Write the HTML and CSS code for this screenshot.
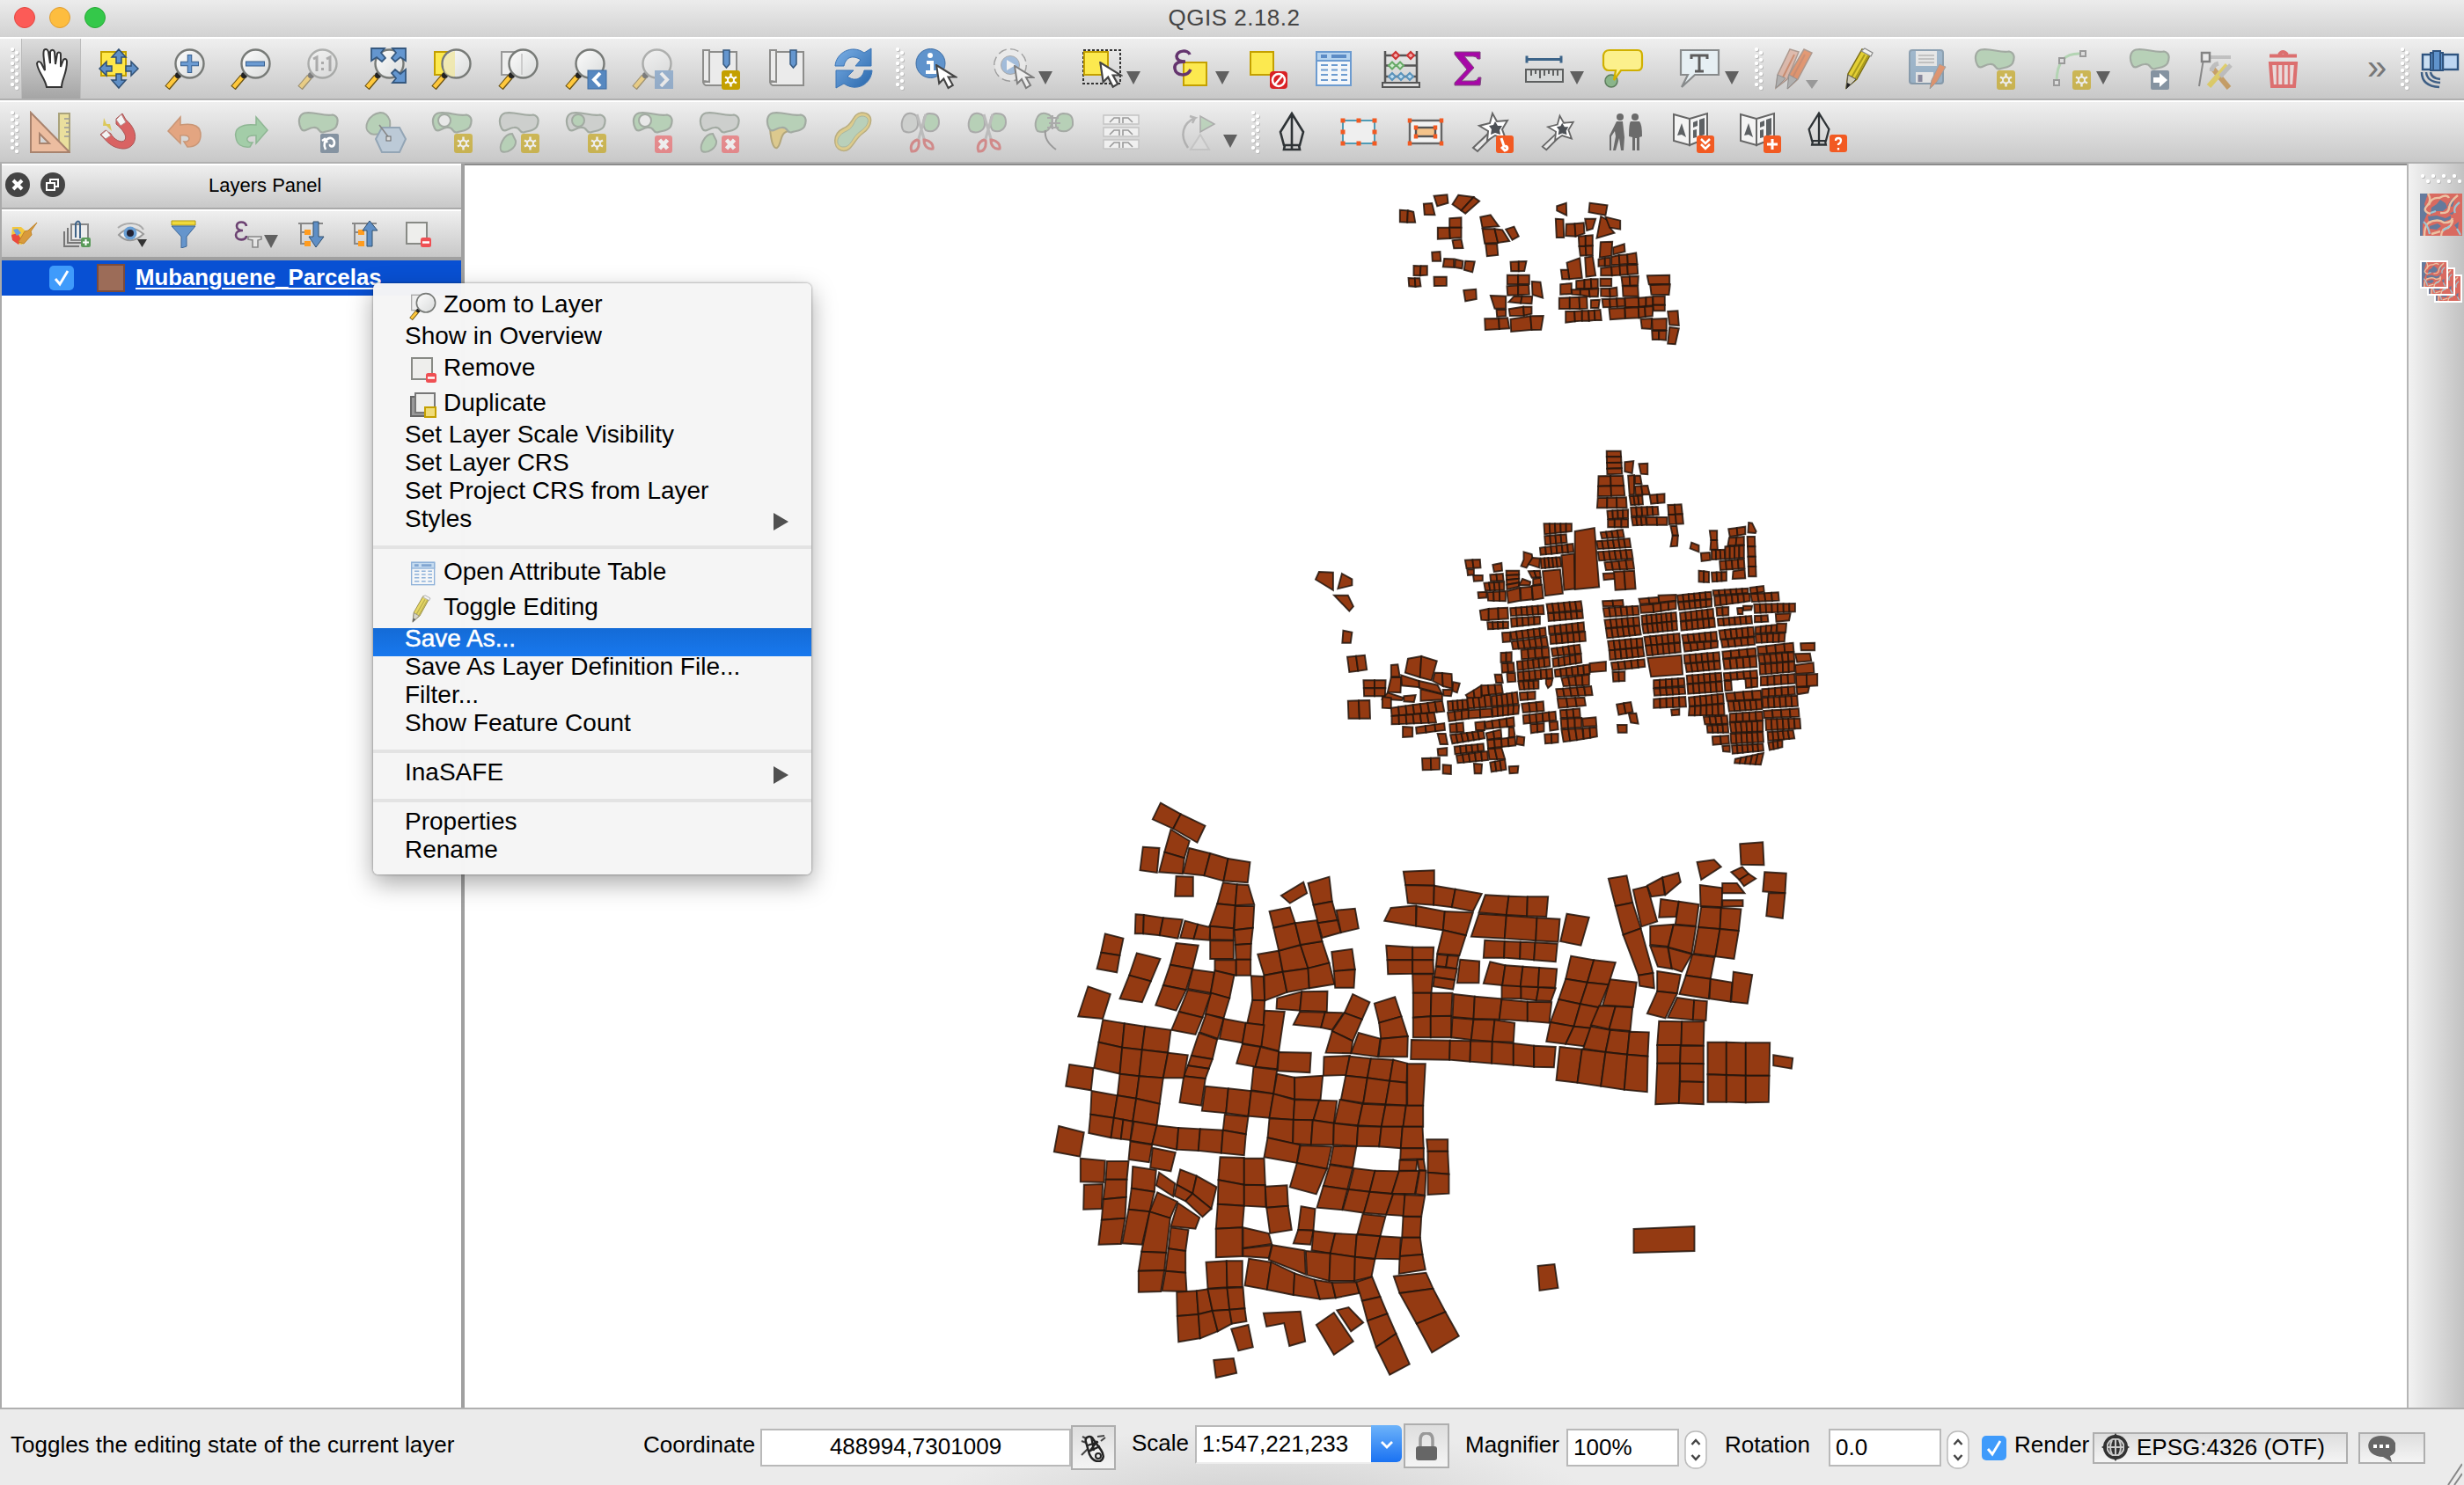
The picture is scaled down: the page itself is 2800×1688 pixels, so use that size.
FILE: index.html
```html
<!DOCTYPE html>
<html lang="en">
<head>
<meta charset="utf-8">
<title>QGIS 2.18.2</title>
<link rel="stylesheet" href="styles.css">
</head>
<body>
<svg class="defs" aria-hidden="true">
  <defs>
    <linearGradient id="glass" x1="0" y1="0" x2="1" y2="1"><stop offset="0" stop-color="#fdfdfd"/><stop offset="1" stop-color="#d9dbdb"/></linearGradient>
    <linearGradient id="blue" x1="0" y1="0" x2="1" y2="1"><stop offset="0" stop-color="#7db0e6"/><stop offset="1" stop-color="#2766ab"/></linearGradient>
    <symbol id="lens" viewBox="0 0 48 48">
      <path d="M3 46L14 33" stroke="#6b5213" stroke-width="7"/><path d="M3.500 45L13 34" stroke="#ffc83c" stroke-width="4.500"/>
      <circle cx="15.500" cy="31.500" r="3.500" fill="#222"/>
      <circle cx="28.500" cy="18.500" r="16" fill="url(#glass)" stroke="#777a77" stroke-width="2.400"/>
    </symbol>
    <symbol id="blob" viewBox="0 0 48 48">
      <path d="M8 2.500C2 4 0 12 4 20C7 26 12 19 18 19C26 18 23 25 29 24.500C34 22 40 24 44 18C47 11 46 6 40 4.500C31 7 18 0 8 2.500Z" stroke="#a2aaa2" stroke-width="2.200"/>
    </symbol>
    <symbol id="badge-new" viewBox="0 0 48 48">
      <rect x="26" y="26" width="21" height="22" rx="3" fill="#c4a000"/>
      <path d="M36.500 29.500v15M30 33.500l13 7M30 40.500l13-7" stroke="#fff" stroke-width="2.400"/><circle cx="36.500" cy="37" r="3.500" fill="#c4a000" stroke="#fff" stroke-width="2"/>
    </symbol>
    <symbol id="badge-del" viewBox="0 0 48 48">
      <rect x="26" y="28" width="20" height="20" rx="3" fill="#ef5a5e"/><path d="M31.500 33l9 10M40.500 33l-9 10" stroke="#fff" stroke-width="4.500"/>
    </symbol>
    <symbol id="arrow-cur" viewBox="0 0 24 28"><path d="M1 1l3 20 5-5 5 10 5-3-5-9h8z" fill="#fff" stroke="#444" stroke-width="2"/></symbol>
    <symbol id="pencil" viewBox="0 0 48 48">
      <path d="M24 2l10 5-16 29-12 10 2-16z" fill="#e3cf35" stroke="#7a6c14" stroke-width="1.500"/>
      <path d="M27 8L12 34M31 9L16 36" stroke="#a99b1c" stroke-width="2"/><path d="M23 4l4-3 9 5-2 4z" fill="#f3f3f1" stroke="#888" stroke-width="1.200"/>
      <path d="M8 31l9 5-11 11z" fill="#cfcbb9" stroke="#555"/><path d="M7 40l4 2-5 5z" fill="#222"/>
    </symbol>
    <symbol id="pen-nib" viewBox="0 0 48 48">
      <path d="M24 3L11 24l4 15h18l4-15zM24 3v42M16 39l-1 5h18l-1-5" fill="none" stroke="#2e3336" stroke-width="2.600"/>
    </symbol>
    <symbol id="wand" viewBox="0 0 48 48">
      <path d="M2 42L20 25l4 4L7 46z" fill="#e8e8e8" stroke="#666" stroke-width="2"/>
      <path d="M24 3l5 9 12-1-6 10 4 11-12-4-9 6 1-11-10-6 12-3z" fill="#fff" stroke="#666" stroke-width="2"/><path d="M27 12l3 5 5 0-3 5 1 5-6-2-5 2 1-6-3-4 5-1z" fill="#4d5156"/>
    </symbol>
    <symbol id="book" viewBox="0 0 48 48">
      <path d="M2 4l18 5v30L2 34zM20 9L40 3v28l-20 8z" fill="#f4f4f4" stroke="#666" stroke-width="2"/>
      <path d="M6 28l5-14 5 16-5-3zM24 13l5-2v6l-5 2zM24 22l4-1v9l-4 1zM31 10l6-2v19l-6 2z" fill="#5d6164"/>
    </symbol>
    <symbol id="badge-o" viewBox="0 0 20 20"><rect width="20" height="20" rx="3" fill="#f25a22"/></symbol>
    <symbol id="page-remove" viewBox="0 0 32 32"><rect x="3" y="3" width="23" height="24" fill="#eeeeec" stroke="#888a85" stroke-width="2"/><rect x="19" y="20" width="12" height="11" rx="2.500" fill="#ef4f53"/><path d="M21 25.500h8" stroke="#fff" stroke-width="2.500"/></symbol>
    <symbol id="table" viewBox="0 0 48 48">
      <rect x="4" y="5" width="39" height="38" fill="#f4f7fa" stroke="#6c9bd0" stroke-width="2"/><rect x="4" y="5" width="39" height="10" fill="#b5d3ef" stroke="#6c9bd0" stroke-width="2"/>
      <path d="M9 10h7M21 10h17" stroke="#5c8cc6" stroke-width="4"/><path d="M9 20h8M21 20h7M32 20h7M9 25.500h8M21 25.500h7M32 25.500h7M9 31h8M21 31h7M32 31h7M9 37h8M21 37h7M32 37h7" stroke="#6c9bd0" stroke-width="2.200"/>
    </symbol>
    <symbol id="swirl" viewBox="0 0 48 48">
      <rect width="48" height="48" fill="#d96a60"/>
      <path d="M0 0h9L5 12l3 11-5 12v13H0z" fill="#657a9c"/>
      <path d="M13 16l6-4 4-5 6 4 2 5-5 4-8 0-6 4zM31 14l5-8 4-2-3 11zM9 26l10-1 10 3 6-3v4l-8 3-9-2-8 2zM11 37l9-3 4 3-5 4-8-1zM39 36l5-4-1 9zM33 23l6-3-2 4z" fill="#657a9c"/>
      <path d="M9 0q5 8-1 14t4 9M10 13q3-9 12-8 8-5 11 0M23 22q10 1 10-6 1-7 10-14M5 48c0-8 2-15 8-16M9 33q12-5 18 0 8 1 10-5M24 48q1-9 8-9 5-4 5-9M13 46l10-3" fill="none" stroke="#ebc1a2" stroke-width="2.400"/>
      <path d="M4 32q5 4 7 14M40 22q-3-6 5-12M42 40l4 7M34 37l-8 5M12 22l6-2" fill="none" stroke="#9cc5d3" stroke-width="2.200"/>
    </symbol>
  </defs>
</svg>

<div class="window">
  <header class="titlebar">
    <div class="lights"><i class="light light-close"></i><i class="light light-min"></i><i class="light light-max"></i></div>
    <h1 class="title">QGIS 2.18.2</h1>
  </header>

  <div class="toolbar toolbar-main">
    <i class="grip"></i>
    <div class="tool tool-pressed"><svg viewBox="0 0 48 48"><path d="M17 45C15 34 7 28 6 18c1-3 4-2 5 0l4 8C15 15 12 8 14 3c2-2 4-1 5 2l2 13 0-13c1-3 4-3 5 0l1 14 2-12c1-2 4-2 4 1l0 14 3-8c2-2 4-1 4 2 0 14-6 20-6 29z" fill="#fff" stroke="#333" stroke-width="2"/></svg></div>
    <div class="tool"><svg viewBox="0 0 48 48"><rect x="4" y="5" width="28" height="27" fill="#ffe748" stroke="#c4a000" stroke-width="2"/><path d="M24 2l8 9h-5v7h-6v-7h-5zM24 46l8-9h-5v-7h-6v7h-5zM2 24l8-8v5h6v6h-6v5zM46 24l-8-8v5h-6v6h6v5z" fill="#5f8fc6" stroke="#2f4f74" stroke-width="1.500"/></svg></div>
    <div class="tool"><svg viewBox="0 0 48 48"><use href="#lens"/><path d="M28.500 8v21M18 18.500h21" stroke="#38608f" stroke-width="5.500"/><path d="M28.500 9v19M19 18.500h19" stroke="#6b9bd2" stroke-width="3.500"/></svg></div>
    <div class="tool"><svg viewBox="0 0 48 48"><use href="#lens"/><path d="M17 18.500h22" stroke="#38608f" stroke-width="6"/><path d="M18 18.500h20" stroke="#6b9bd2" stroke-width="4"/></svg></div>
    <div class="tool dim"><svg viewBox="0 0 48 48"><use href="#lens"/><path d="M18 13l4-2v16M33 13l4-2v16M28.500 16v3M28.500 23v3" fill="none" stroke="#777" stroke-width="3"/></svg></div>
    <div class="tool"><svg viewBox="0 0 48 48"><use href="#lens"/><path d="M8 1h15l-4 5 5 6-4 4-6-5-6 4zM47 1H32l4 5-5 6 4 4 6-5 6 4zM47 40H32l4-5-5-6 4-4 6 5 6-5z" fill="#6496cf" stroke="#35587f" stroke-width="1.800"/></svg></div>
    <div class="tool"><svg viewBox="0 0 48 48"><rect x="4" y="5" width="22" height="26" fill="#fce94f" stroke="#c4a000" stroke-width="2"/><use href="#lens"/><path d="M27 4C15 6 11 18 16 29q6 5 11 4z" fill="#efe6a2" opacity=".8"/></svg></div>
    <div class="tool"><svg viewBox="0 0 48 48"><rect x="4" y="5" width="22" height="26" fill="#eee" stroke="#999" stroke-width="2"/><use href="#lens"/><path d="M27 7v24" stroke="#ccc" stroke-width="2"/></svg></div>
    <div class="tool"><svg viewBox="0 0 48 48"><use href="#lens"/><rect x="26" y="26" width="21" height="21" fill="#5788c0" stroke="#3f6ca2"/><path d="M40 29l-7 7.500 7 7.500" fill="none" stroke="#fff" stroke-width="4"/></svg></div>
    <div class="tool dim"><svg viewBox="0 0 48 48"><use href="#lens"/><rect x="26" y="26" width="21" height="21" fill="#5788c0"/><path d="M33 29l7 7.500-7 7.500" fill="none" stroke="#fff" stroke-width="4"/></svg></div>
    <div class="tool"><svg viewBox="0 0 48 48"><path d="M5 3h7v36H5zM12 5h31v38H8q-3-1-3-5l7 1z" fill="#ebebeb" stroke="#8d8d8b" stroke-width="2"/><path d="M28 3h7v16l-3.500 4-3.500-4z" fill="#6496cf" stroke="#35587f" stroke-width="1.500"/><use href="#badge-new"/></svg></div>
    <div class="tool"><svg viewBox="0 0 48 48"><path d="M5 3h7v36H5zM12 5h31v38H8q-3-1-3-5l7 1z" fill="#ebebeb" stroke="#8d8d8b" stroke-width="2"/><path d="M28 3h7v16l-3.500 4-3.500-4z" fill="#6496cf" stroke="#35587f" stroke-width="1.500"/></svg></div>
    <div class="tool"><svg viewBox="0 0 48 48"><path d="M3 21C4 6 22-4 36 6l8-5v20H26l6-7C23 8 15 11 13 21zM45 26C44 42 27 51 13 41l-9 5V26h20l-7 7c8 6 17 3 19-7z" fill="url(#blue)" stroke="#3b74b5"/></svg></div>
    <i class="grip"></i>
    <div class="tool"><svg viewBox="0 0 48 48"><circle cx="17.500" cy="18" r="16.500" fill="#5f93cc" stroke="#3e6ea5"/><path d="M13 17h6v11M12 28h12" fill="none" stroke="#fff" stroke-width="4"/><circle cx="17" cy="9" r="3" fill="#fff"/><use href="#arrow-cur" x="23" y="19" width="25" height="29"/></svg></div>
    <div class="tool dim-light"><svg viewBox="0 0 48 48"><circle cx="20" cy="20" r="16" fill="#eee" stroke="#777" stroke-width="6" stroke-dasharray="8.500 4"/><circle cx="20" cy="20" r="16" fill="#eee" stroke="#eee" stroke-width="3"/><circle cx="20" cy="20" r="10.500" fill="#7ba6d8" stroke="#888"/><path d="M16 14l10 6-10 6z" fill="#fff"/><use href="#arrow-cur" x="24" y="20" width="24" height="28"/></svg></div>
    <i class="drop"></i>
    <div class="tool"><svg viewBox="0 0 48 48"><rect x="2" y="3" width="42" height="38" fill="none" stroke="#333" stroke-width="2" stroke-dasharray="3 2"/><rect x="3" y="5" width="27" height="26" fill="#fce94f" stroke="#c4a000" stroke-width="2"/><use href="#arrow-cur" x="20" y="16" width="27" height="31"/></svg></div>
    <i class="drop"></i>
    <div class="tool"><svg viewBox="0 0 48 48"><rect x="15" y="17" width="26" height="26" fill="#fce94f" stroke="#c4a000" stroke-width="2"/><path d="M22 8C20 2 8 3 7 10c0 5 5 6 10 6C9 16 4 18 5 24c1 8 14 10 18 1" fill="none" stroke="#64346e" stroke-width="3.500"/></svg></div>
    <i class="drop"></i>
    <div class="tool"><svg viewBox="0 0 48 48"><rect x="3" y="5" width="26" height="26" fill="#fce94f" stroke="#c4a000" stroke-width="2"/><rect x="25" y="27" width="20" height="20" rx="4" fill="#d92125"/><circle cx="35" cy="37" r="7" fill="none" stroke="#fff" stroke-width="2.500"/><path d="M40 31L30 43" stroke="#fff" stroke-width="2.500"/></svg></div>
    <div class="tool"><svg viewBox="0 0 48 48"><use href="#table"/></svg></div>
    <div class="tool"><svg viewBox="0 0 48 48"><path d="M6 4v36M42 4v36M6 9h36M6 20.500h36M6 33h36" stroke="#555" stroke-width="2.500"/><rect x="3" y="40" width="42" height="5" fill="#ddd" stroke="#555" stroke-width="2"/><g stroke-width="2"><path d="M14 9l4-4 4 4-4 4zM31 9l4-4 4 4-4 4z" fill="#f5a9a9" stroke="#c33"/><path d="M10 20.500l4-4 4 4-4 4zM19 20.500l4-4 4 4-4 4z" fill="#cfeccf" stroke="#6a6"/><path d="M10 33l4-4 4 4-4 4zM20 33l4-4 4 4-4 4zM30 33l4-4 4 4-4 4z" fill="#bcdcf0" stroke="#5b93bb"/></g></svg></div>
    <div class="tool"><svg viewBox="0 0 48 48"><path d="M9 5h29v8h-3q-1-3-5-3H20l11 13-14 15h14q4 0 5-4h3l-1 9H9v-3l14-15L9 8z" fill="#a707a7" stroke="#7c4b7c"/></svg></div>
    <div class="tool"><svg viewBox="0 0 48 48"><path d="M3 13.500h40M3 9.500v8M42 9.500v8" stroke="#3c6489" stroke-width="3"/><rect x="2" y="25" width="42" height="14" fill="#d7d9d9" stroke="#5e6060" stroke-width="2"/><path d="M8 26v6M13 26v4M18 26v9M23 26v6M28 26v4M33 26v6M38 26v6" stroke="#5e6060" stroke-width="2"/></svg></div>
    <i class="drop"></i>
    <div class="tool"><svg viewBox="0 0 48 48"><circle cx="11" cy="38" r="7" fill="#8ab58a" stroke="#5d7d5d" stroke-width="1.500"/><path d="M9 3h32q5 0 5 6v11q0 6-5 6H22L14 37l2-11H8q-5 0-6-6V9q1-6 7-6z" fill="#fcf08c" stroke="#d0b000" stroke-width="2.200"/></svg></div>
    <div class="tool"><svg viewBox="0 0 48 48"><path d="M2 3h43v28H18L3 45l7-14H2z" fill="#e6eff3" stroke="#888b8c" stroke-width="2.200"/><path d="M14 13V9h18v4M23 9v18M18 27h10" fill="none" stroke="#5c5c5c" stroke-width="3"/></svg></div>
    <i class="drop"></i>
    <i class="grip"></i>
    <div class="tool dim-light"><svg viewBox="0 0 48 48"><path d="M18 2l10 3-13 31-13 10 2-15z" fill="#d9a08a" stroke="#8a6a5a" stroke-width="1.500"/><path d="M34 2l9 4-16 30-11 10 1-15z" fill="#e2682b" stroke="#8a6a5a" stroke-width="1.500"/><path d="M23 8L10 34M35 8L21 34" stroke="#bf5a2c" stroke-width="2"/><path d="M4 31l9 4-11 11zM17 31l9 5-11 11z" fill="#999" stroke="#666"/></svg></div>
    <i class="drop drop-small"></i>
    <div class="tool"><svg viewBox="0 0 48 48"><use href="#pencil"/></svg></div>
    <div class="tool dim-light"><svg viewBox="0 0 48 48"><rect x="2" y="3" width="38" height="38" rx="3" fill="#7299bb" stroke="#54748f" stroke-width="2"/><rect x="9" y="4" width="24" height="17" fill="#e9e9e9"/><path d="M12 9h18M12 13h18M12 17h18" stroke="#999" stroke-width="1.600"/><rect x="9" y="28" width="20" height="12" fill="#eee"/><path d="M14 31v8" stroke="#557" stroke-width="5"/><path d="M36 19l7 3-10 17-8 8 2-10z" fill="#e2682b" stroke="#777"/></svg></div>
    <div class="tool"><svg viewBox="0 0 48 48"><use href="#blob" fill="#b7d0b7"/><g class="dim-light"><use href="#badge-new"/></g></svg></div>
    <div class="tool"><svg viewBox="0 0 48 48"><path d="M4 40C4 15 14 6 32 7" fill="none" stroke="#b3d4b3" stroke-width="3"/><g fill="#ddd" stroke="#999" stroke-width="2"><rect x="1" y="37" width="6" height="6"/><rect x="7" y="12" width="6" height="6"/><rect x="31" y="4" width="6" height="6"/></g><g class="dim-light"><use href="#badge-new" x="-4" width="48" height="48"/></g></svg></div>
    <i class="drop"></i>
    <div class="tool"><svg viewBox="0 0 48 48"><use href="#blob" fill="#b7d0b7"/><rect x="25" y="26" width="21" height="22" rx="2" fill="#8593a1"/><path d="M28 34h7v-5l9 8-9 8v-5h-7z" fill="#fff"/></svg></div>
    <div class="tool dim-light"><svg viewBox="0 0 48 48"><path d="M9 13L4 44" stroke="#555" stroke-width="2"/><path d="M14 11h26" stroke="#aaa" stroke-width="4"/><rect x="7" y="6" width="9" height="10" fill="#eee" stroke="#444" stroke-width="2.500"/><path d="M18 22l20 24" stroke="#bb7a20" stroke-width="6"/><path d="M36 20L15 44" stroke="#e0c424" stroke-width="6"/><path d="M26 18q-7 2-8 9M40 20L28 33" stroke="#aaa" fill="none" stroke-width="5"/></svg></div>
    <div class="tool"><svg viewBox="0 0 48 48"><path d="M8 9.500h31M19 8q4-6 9 0" fill="none" stroke="#dc6f6f" stroke-width="4"/><path d="M9 18h29l-2 26H11z" fill="#e9dada" stroke="#dc6f6f" stroke-width="4"/><path d="M17 20v22M23.500 20v22M30 20v22" stroke="#dc7676" stroke-width="2.500"/></svg></div>
    <span class="more">»</span>
    <i class="grip"></i>
    <div class="tool"><svg viewBox="0 0 48 48"><rect x="3" y="8" width="14" height="17" fill="#c9def2" stroke="#2f5480" stroke-width="2.400"/><rect x="26" y="8" width="17" height="17" fill="#bdd6f2" stroke="#2f5480" stroke-width="2.400"/><path d="M12 6h14v20H12z" fill="#5f93cc" stroke="#2f5480" stroke-width="2"/><path d="M15 4h8v22h-8z" fill="#5f93cc" stroke="#2f5480" stroke-width="2"/><path d="M2 28q0 16 20 17M7 28q1 11 16 12M12 28q1 7 11 8" fill="none" stroke="#3f5f85" stroke-width="2.500"/></svg></div>
  </div>

  <div class="toolbar toolbar-digitize">
    <i class="grip"></i>
    <div class="tool"><svg viewBox="0 0 48 48"><rect x="35" y="3" width="12" height="42" fill="#eadf9d" stroke="#aaa37c" stroke-width="2"/><path d="M41 9h6M43 14h4M41 19h6M43 24h4M41 29h6" stroke="#999" stroke-width="1.500"/><path d="M3 2v45h44zM13 26v11h11z" fill="#ecbda0" fill-rule="evenodd" stroke="#a8836e" stroke-width="2"/></svg></div>
    <div class="tool"><svg viewBox="0 0 48 48"><path d="M24 9l7-6 4 7C52 24 47 44 31 43 18 42 13 34 6 27l6-5 6 4c3 6 12 12 16 7 3-5-4-13-10-18z" fill="#d96363" stroke="#a55"/><path d="M24 10l6-6 5 9-6 4zM7 27l6-5 5 6-6 4z" fill="#f3f3f3" stroke="#b88"/><path d="M10 8l3 7h4l2 8-6-6H9z" fill="#dcc85a"/></svg></div>
    <div class="tool"><svg viewBox="0 0 48 48"><path d="M7 23L21 7v9c16-3 24 2 23 13-1 9-7 12-15 12l-4-6c8 1 9-9-4-7v9z" fill="#e3a581" stroke="#c99676" stroke-width="1.500"/></svg></div>
    <div class="tool"><svg viewBox="0 0 48 48"><path d="M44 22L31 7v9C13 14 6 21 8 30c1 8 7 12 16 11l3-5c-8 1-10-9 4-8v9z" fill="#a3cda8" stroke="#8fb694" stroke-width="1.500"/></svg></div>
    <div class="tool"><svg viewBox="0 0 48 48"><use href="#blob" fill="#b7d0b7"/><rect x="26" y="26" width="21" height="22" rx="2" fill="#8593a1"/><path d="M32 44c-6-12 9-18 10-8 0 6-6 5-5 2M28 34l3-2 3 4" fill="none" stroke="#fff" stroke-width="2.600"/></svg></div>
    <div class="tool"><svg viewBox="0 0 48 48"><path d="M18 2C4 4-2 20 6 25c4 4 7 0 12 2 10 1 12-8 11-16C27 5 24 2 18 2z" fill="#b7d0b7" stroke="#a2aaa2" stroke-width="2"/><path d="M20 19h20l7 13-7 15H20l-7-15z" fill="#bccad7" stroke="#93a5b5" stroke-width="2"/><path d="M17 16l12 16" stroke="#888" stroke-width="1.500"/><rect x="25" y="29" width="5" height="5" fill="#ddd" stroke="#666"/></svg></div>
    <div class="tool"><svg viewBox="0 0 48 48"><use href="#blob" fill="#b7d0b7"/><circle cx="15" cy="11" r="7" fill="#e8e8e8" stroke="#a2aaa2" stroke-width="2"/><g class="dim-light"><use href="#badge-new"/></g></svg></div>
    <div class="tool"><svg viewBox="0 0 48 48"><use href="#blob" fill="#cdcfcd"/><path d="M16 26C6 26 0 42 4 46c6 3 17-4 16-12z" fill="#b7d0b7" stroke="#a2aaa2" stroke-width="2"/><g class="dim-light"><use href="#badge-new"/></g></svg></div>
    <div class="tool"><svg viewBox="0 0 48 48"><use href="#blob" fill="#cdcfcd"/><circle cx="15" cy="11" r="7" fill="#b7d0b7" stroke="#a2aaa2" stroke-width="2"/><g class="dim-light"><use href="#badge-new"/></g></svg></div>
    <div class="tool"><svg viewBox="0 0 48 48"><use href="#blob" fill="#b7d0b7"/><circle cx="15" cy="11" r="7" fill="#e8e8e8" stroke="#a2aaa2" stroke-width="2"/><g class="dim-light"><use href="#badge-del"/></g></svg></div>
    <div class="tool"><svg viewBox="0 0 48 48"><use href="#blob" fill="#cdcfcd"/><path d="M16 26C6 26 0 42 4 46c6 3 17-4 16-12z" fill="#b7d0b7" stroke="#a2aaa2" stroke-width="2"/><g class="dim-light"><use href="#badge-del"/></g></svg></div>
    <div class="tool"><svg viewBox="0 0 48 48"><path d="M5 20q2 24 8 22c6-4 2-18 14-19L24 16z" fill="#dcc98e" stroke="#b3a77c" stroke-width="2"/><use href="#blob" fill="#b7d0b7"/></svg></div>
    <div class="tool"><svg viewBox="0 0 48 48"><path d="M33 2C22 3 24 16 12 20 0 26 0 42 10 45c12 3 14-12 24-19C46 18 48 2 33 2z" fill="#dccb8c" stroke="#b9ad80" stroke-width="1.500"/><path d="M33 6C23 8 27 18 16 23 4 28 3 39 11 41c11 1 10-11 21-18C42 16 44 6 33 6z" fill="#b9d0ba" stroke="#a9b6a0"/></svg></div>
    <div class="tool"><svg viewBox="0 0 48 48"><path d="M14 3C3 1 0 18 5 23c8 4 16-1 16-8 0-9-2-11-7-12z" fill="#cdcfcd" stroke="#aaa" stroke-width="2"/><path d="M34 3c-8 0-8 14-4 19 8 4 15-2 15-9 0-8-4-10-11-10z" fill="#b7d0b7" stroke="#aaa" stroke-width="2"/><path d="M20 4l9 31M30 4l-9 31" stroke="#bbb" stroke-width="3"/><g fill="none" stroke="#d08a8a" stroke-width="3"><path d="M20 33c-6 2-8 8-6 13 6 1 9-5 8-12zM29 33c6 1 10 5 9 10-6 1-10-3-10-10z"/></g></svg></div>
    <div class="tool"><svg viewBox="0 0 48 48"><path d="M14 3C3 1 0 18 5 23c8 4 16-1 16-8 0-9-2-11-7-12z" fill="#b7d0b7" stroke="#aaa" stroke-width="2"/><path d="M34 3c-8 0-8 14-4 19 8 4 15-2 15-9 0-8-4-10-11-10z" fill="#b7d0b7" stroke="#aaa" stroke-width="2"/><path d="M20 4l9 31M30 4l-9 31" stroke="#bbb" stroke-width="3"/><g fill="none" stroke="#d08a8a" stroke-width="3"><path d="M20 33c-6 2-8 8-6 13 6 1 9-5 8-12zM29 33c6 1 10 5 9 10-6 1-10-3-10-10z"/></g></svg></div>
    <div class="tool"><svg viewBox="0 0 48 48"><path d="M14 3C3 1 0 18 5 23c8 3 14-1 16-8 2-9-2-11-7-12zM34 3c-9 1-11 14-5 19 9 4 17-2 16-9 0-8-4-10-11-10z" fill="#b7d0b7" stroke="#a5aaa5" stroke-width="2"/><path d="M16 8h13M18 14h13M16 19h13M22 5v16" stroke="#aaa" stroke-width="2"/><path d="M14 22q-2 12 12 22" fill="none" stroke="#999" stroke-width="2"/></svg></div>
    <div class="tool"><svg viewBox="0 0 48 48"><g fill="#f0f0f0" stroke="#c4c4c4" stroke-width="1.500"><path d="M4 5h40v10H4zM4 19h40v10H4zM4 33h40v10H4z"/></g><path d="M11 13l5-5h6v6M37 13l-5-5h-6v6M11 27l5-5h6v6M37 27l-5-5h-6v6M11 41l5-5h6v6M37 41l-5-5h-6v6" fill="none" stroke="#999" stroke-width="1.600"/></svg></div>
    <div class="tool dim-light"><svg viewBox="0 0 48 48"><path d="M26 6v18l16-9z" fill="#a5c9a5" stroke="#888" stroke-width="1.500"/><path d="M26 27l10 17H15z" fill="#ddd" stroke="#bbb" stroke-width="2"/><path d="M12 42C2 28 6 14 20 8l-6-2M20 8l-3 6" fill="none" stroke="#999" stroke-width="2.500"/></svg></div>
    <i class="drop"></i>
    <i class="grip"></i>
    <div class="tool"><svg viewBox="0 0 48 48"><use href="#pen-nib"/></svg></div>
    <div class="tool"><svg viewBox="0 0 48 48"><rect x="6" y="11" width="36" height="26" fill="#efefef" stroke="#4f9bb5" stroke-width="2"/><path d="M6 8.500v5M24 8.500v5M42 8.500v5M6 21.500v5M42 21.500v5M6 34.500v5M24 34.500v5M42 34.500v5" stroke="#f25a22" stroke-width="5"/></svg></div>
    <div class="tool"><svg viewBox="0 0 48 48"><rect x="6" y="11" width="36" height="26" fill="#f3f3f3" stroke="#666" stroke-width="2.400"/><rect x="13" y="19" width="22" height="10" fill="#f5c48b" stroke="#555" stroke-width="2.400"/><path d="M6 8.500v5M42 8.500v5M6 34.500v5M42 34.500v5M13 16.500v5M35 16.500v5M13 26.500v5M35 26.500v5" stroke="#f25a22" stroke-width="4.500"/></svg></div>
    <div class="tool"><svg viewBox="0 0 48 48"><use href="#wand"/><use href="#badge-o" x="28" y="28" width="20" height="20"/><path d="M34 31l3 9c5 0 5 4 1 5l-4-4" fill="none" stroke="#fff" stroke-width="3"/></svg></div>
    <div class="tool"><svg viewBox="0 0 48 48"><use href="#wand" x="3" y="3" width="43" height="43"/></svg></div>
    <div class="tool"><svg viewBox="0 0 48 48"><circle cx="17" cy="7" r="4" fill="#6b6b6b"/><circle cx="34" cy="7" r="4" fill="#6b6b6b"/><path d="M13 12h7l2 18-1 15h-3l-2-14-4 14H9l3-16-1-6-4 6 0 16H5V28zM29 12h10q3 3 3 17l-3 1v15h-3V31h-2v14h-3V30l-4-1q0-15 2-17z" fill="#6b6b6b"/></svg></div>
    <div class="tool"><svg viewBox="0 0 48 48"><use href="#book"/><use href="#badge-o" x="28" y="28" width="20" height="20"/><path d="M33 32l5 5 5-5M33 38l5 5 5-5" fill="none" stroke="#fff" stroke-width="2.500"/></svg></div>
    <div class="tool"><svg viewBox="0 0 48 48"><use href="#book"/><use href="#badge-o" x="28" y="28" width="20" height="20"/><path d="M38 32v12M32 38h12" stroke="#fff" stroke-width="3"/></svg></div>
    <div class="tool"><svg viewBox="0 0 48 48"><use href="#pen-nib" x="-6" y="0" width="42" height="42"/><use href="#badge-o" x="27" y="27" width="20" height="20"/><path d="M34 34q0-3 3-3t3 3q0 2-3 4v1M37 42v2.500" fill="none" stroke="#fff" stroke-width="2.300"/></svg></div>
  </div>

  <main class="body">
    <aside class="panel">
      <div class="panel-title">
        <svg class="panel-btn" viewBox="0 0 28 28"><circle cx="14" cy="14" r="14" fill="#444"/><path d="M9 9l10 10M19 9L9 19" stroke="#fff" stroke-width="4"/></svg>
        <svg class="panel-btn" viewBox="0 0 28 28"><circle cx="14" cy="14" r="14" fill="#444"/><path d="M7 12h9v8H7zM11 11V8h9v8h-3" fill="none" stroke="#fff" stroke-width="2"/></svg>
        <h2 class="panel-name">Layers Panel</h2>
      </div>
      <div class="panel-tools">
        <svg viewBox="0 0 32 32"><path d="M3 8l10 0 9 8-8 12-5-1-7-8z" fill="#f3c73e"/><path d="M2 17l7-2 4 7-3 6-7-5z" fill="#ea4a3d"/><path d="M4 11l5-1 4 5-5 3z" fill="#6aa0dc"/><path d="M31 3l-7 10 1 4-9 10-6-2 7-12 4-1z" fill="#d99a3c" stroke="#c08428"/></svg>
        <svg viewBox="0 0 32 32"><path d="M1 13v17h17M5 9v17h17" fill="none" stroke="#777" stroke-width="2"/><path d="M9 5h19v18H9z" fill="#ededed" stroke="#888" stroke-width="2"/><path d="M14 20V4q3-5 5 0v17" fill="none" stroke="#3f6489" stroke-width="2"/><rect x="20" y="20" width="11" height="11" rx="2" fill="#5a9a5a"/><path d="M25.500 22v7M22 25.500h7" stroke="#fff" stroke-width="2"/></svg>
        <svg viewBox="0 0 36 32"><path d="M2 9C10 2 26 2 31 11" fill="none" stroke="#aaa" stroke-width="2"/><path d="M3 17Q16 3 31 16 16 30 3 17z" fill="#eee" stroke="#999" stroke-width="2"/><circle cx="16" cy="15" r="7.500" fill="#6a9fd4"/><circle cx="16" cy="15" r="4" fill="#223"/><path d="M24 22h11l-5.500 9z" fill="#333"/></svg>
        <svg viewBox="0 0 32 32"><path d="M3 1h27v5H3z" fill="#f0d93c" stroke="#b29b14"/><path d="M3 7h27L20 19v11l-6 2V19z" fill="#6595cc" stroke="#3d6797"/></svg>
        <svg viewBox="0 0 32 32"><path d="M14 7C13 1 3 1 3 7c0 3 3 5 7 5-5 0-8 2-8 5 0 7 12 7 12 1" fill="none" stroke="#6c4272" stroke-width="2.600"/><path d="M16 19h15v3l-4 1v8h-6v-8l-5-1z" fill="#e6e6e6" stroke="#888" stroke-width="1.600"/></svg>
        <i class="drop"></i>
        <svg viewBox="0 0 32 32"><path d="M1 4h28M4 4v24M4 14h5M4 27h5" fill="none" stroke="#888" stroke-width="2"/><path d="M8 11h7v6H8zM8 24h7v6H8z" fill="#ff9c1f"/><path d="M18 2h6v17h6l-9 12-8-12h5z" fill="#5f8fc6" stroke="#31506f"/></svg>
        <svg viewBox="0 0 32 32"><path d="M1 4h28M4 4v24M4 14h5M4 27h5" fill="none" stroke="#888" stroke-width="2"/><path d="M8 11h7v6H8zM8 24h7v6H8z" fill="#ff9c1f"/><path d="M18 30h6V12h6L21 1l-8 11h5z" fill="#5f8fc6" stroke="#31506f"/></svg>
        <svg viewBox="0 0 32 32"><use href="#page-remove"/></svg>
      </div>
      <div class="tree">
        <div class="layer">
          <svg class="check" viewBox="0 0 28 28"><rect width="28" height="28" rx="5" fill="#3f9bfb"/><path d="M7 15l5 6 9-15" fill="none" stroke="#fff" stroke-width="2.800"/></svg>
          <i class="swatch"></i>
          <span class="layer-name">Mubanguene_Parcelas</span>
        </div>
      </div>
    </aside>
    <svg class="map" id="map" viewBox="528 188 2206 1412"></svg>
    <aside class="side-tools">
      <i class="grip-h"></i>
      <svg class="raster" viewBox="0 0 48 48"><use href="#swirl"/></svg>
      <svg class="raster" viewBox="0 0 48 48"><use href="#swirl" x="18" y="18" width="28" height="28"/><path d="M17 17h30v30H17z" fill="none" stroke="#fff" stroke-width="2"/><use href="#swirl" x="10" y="10" width="28" height="28"/><path d="M9 9h30v30H9z" fill="none" stroke="#fff" stroke-width="2"/><use href="#swirl" x="2" y="2" width="28" height="28"/><path d="M1 1h30v30H1z" fill="none" stroke="#fff" stroke-width="2"/></svg>
    </aside>
  </main>

  <footer class="status">
    <span class="hint">Toggles the editing state of the current layer</span>
    <span>Coordinate</span>
    <div class="field field-center">488994,7301009</div>
    <div class="sbtn sbtn-tall"><svg class="s-icon" viewBox="0 0 32 32"><path d="M3 3l10 5M2 8l8 3M2 24l8-8M20 3l8-1M24 8l5-4" stroke="#444" stroke-width="2"/><path d="M8 4q5-3 8 3l8 11q6 9-1 13-8 1-12-8L7 9q-1-3 1-5z" fill="#eee" stroke="#222" stroke-width="2.500"/><path d="M9 13l12-4M12 19l11-5M13 3l3 16M20 8l-9 12" stroke="#222" stroke-width="2.200"/><circle cx="21" cy="25" r="3" fill="none" stroke="#222" stroke-width="2"/></svg></div>
    <span class="raised">Scale</span>
    <div class="field field-combo">1:547,221,233</div>
    <div class="combo-btn"><svg viewBox="0 0 35 42"><path d="M12 19l6 6 6-6" fill="none" stroke="#fff" stroke-width="2.800"/></svg></div>
    <div class="sbtn sbtn-lock"><svg class="s-icon" viewBox="0 0 32 32"><path d="M9 17V9q0-8 7-8t7 8v8" fill="none" stroke="#999" stroke-width="3.500"/><rect x="4" y="16" width="24" height="16" rx="3" fill="#666"/></svg></div>
    <span>Magnifier</span>
    <div class="field">100%</div>
    <svg class="spin" viewBox="0 0 26 44"><rect x="1" y="1" width="24" height="42" rx="11" fill="#fff" stroke="#bbb" stroke-width="1.500"/><path d="M8.500 16l4.500-5 4.500 5M8.500 28l4.500 5 4.500-5" fill="none" stroke="#444" stroke-width="2.500"/></svg>
    <span>Rotation</span>
    <div class="field">0.0</div>
    <svg class="spin" viewBox="0 0 26 44"><rect x="1" y="1" width="24" height="42" rx="11" fill="#fff" stroke="#bbb" stroke-width="1.500"/><path d="M8.500 16l4.500-5 4.500 5M8.500 28l4.500 5 4.500-5" fill="none" stroke="#444" stroke-width="2.500"/></svg>
    <svg class="check" viewBox="0 0 28 28"><rect width="28" height="28" rx="5" fill="#3f9bfb"/><path d="M7 15l5 6 9-15" fill="none" stroke="#fff" stroke-width="2.800"/></svg>
    <span>Render</span>
    <div class="sbtn sbtn-crs"><svg class="s-icon" viewBox="0 0 32 32"><circle cx="16" cy="16" r="14" fill="#333"/><g fill="none" stroke="#ccc" stroke-width="2"><circle cx="16" cy="16" r="9.500"/><path d="M6 16h20M16 6v20M12 8q-4 8 0 16M20 8q4 8 0 16"/></g><path d="M16 0l4 6h-8zM16 32l4-6h-8zM0 16l6-4v8zM32 16l-6-4v8z" fill="#333"/></svg>EPSG:4326 (OTF)</div>
    <div class="sbtn sbtn-msg"><svg class="s-icon" viewBox="0 0 32 32"><path d="M16 2c21 0 20 20 10 23l2 7-10-6C-4 26-4 2 16 2z" fill="#666"/><path d="M7 14h4M14 14h4M21 14h4" stroke="#fff" stroke-width="4"/></svg></div>
    <svg class="resize" viewBox="0 0 18 30"><path d="M2 30L18 6M9 30l9-13" stroke="#888" stroke-width="2"/></svg>
  </footer>
</div>

<nav class="menu">
  <div class="item item-icon"><svg viewBox="0 0 48 48"><rect x="4" y="5" width="22" height="26" fill="#eee" stroke="#aaa" stroke-width="2"/><use href="#lens"/></svg>Zoom to Layer</div>
  <div class="item">Show in Overview</div>
  <div class="item item-icon"><svg viewBox="0 0 32 32"><use href="#page-remove"/></svg>Remove</div>
  <div class="item item-icon"><svg viewBox="0 0 32 32"><path d="M2 7h20v22H2z" fill="#999" stroke="#666" stroke-width="2"/><path d="M7 3h22v22H7z" fill="#eeeeec" stroke="#777" stroke-width="2"/><rect x="18" y="19" width="12" height="11" fill="#f0dc78" stroke="#c4a000" stroke-width="2"/></svg>Duplicate</div>
  <div class="item">Set Layer Scale Visibility</div>
  <div class="item">Set Layer CRS</div>
  <div class="item">Set Project CRS from Layer</div>
  <div class="item item-sub">Styles</div>
  <hr class="rule">
  <div class="item item-icon"><svg class="soft" viewBox="0 0 48 48"><use href="#table"/></svg>Open Attribute Table</div>
  <div class="item item-icon"><svg class="soft" viewBox="0 0 48 48"><use href="#pencil"/></svg>Toggle Editing</div>
  <div class="item item-active">Save As...</div>
  <div class="item">Save As Layer Definition File...</div>
  <div class="item">Filter...</div>
  <div class="item">Show Feature Count</div>
  <hr class="rule">
  <div class="item item-sub">InaSAFE</div>
  <hr class="rule">
  <div class="item">Properties</div>
  <div class="item">Rename</div>
</nav>
<script src="map.js"></script>
</body>
</html>
```
FILE: styles.css
```css
* { box-sizing: border-box; }
body { margin: 0; width: 2800px; height: 1688px; overflow: hidden; position: relative; background: #ebebeb; font-family: "Liberation Sans", Arial, sans-serif; font-size: 26px; color: #000; }
.defs { display: block; width: 0; height: 0; position: absolute; }
.window { display: flex; flex-direction: column; width: 2800px; height: 1688px; }

.titlebar { display: grid; grid-template-columns: 200px 1fr 200px; align-items: center; height: 42px; background: linear-gradient(#ececec, #d2d2d2); }
.lights { display: flex; gap: 16px; padding-left: 16px; margin-top: -2px; }
.light { width: 24px; height: 24px; border-radius: 50%; }
.light-close { background: #fc5b57; border: 1.500px solid #e2463f; }
.light-min { background: #fdbd3f; border: 1.500px solid #df9d33; }
.light-max { background: #34c84a; border: 1.500px solid #27aa35; }
.title { margin: -2px 0 0 5px; text-align: center; font-weight: 400; font-size: 26px; letter-spacing: .5px; line-height: 40px; color: #444; }

.toolbar { display: grid; align-items: start; height: 72px; padding: 10px 0 0 12px; border-top: 2px solid #fff; border-bottom: 2px solid #b0b0b0; background: linear-gradient(#efefef, #c8c8c8); }
.toolbar-main { grid-template-columns: 12px 87px 76px 75px repeat(9, 76px) 72px 22px 88px 52px 49px 51px 50px 51px 37px 74px 76px 76px 88px 52px 36px 88px 52px 34px 22px 36px 40px 76px 75px 90px 49px 37px 76px 76px 119px 38px 22px 50px; }
.toolbar-digitize { grid-template-columns: 20px 76px 76px 76px 78px repeat(12, 76px) 88px 52px 32px 22px repeat(9, 76px); padding-top: 10px; }
.tool svg { display: block; width: 48px; height: 48px; }
.tool-pressed { width: 68px; height: 68px; margin-top: -10px; padding: 10px 0 0 11px; background: linear-gradient(#dcdcdc, #a5a5a5); border-left: 1px solid #bbb; border-right: 1px solid #bbb; }
.dim { opacity: .5; }
.dim-light { opacity: .6; }
.grip { width: 10px; height: 48px; background: radial-gradient(circle at 2px 2px, #fff 1.800px, transparent 2.400px) 0 0 / 10px 8px, radial-gradient(circle at 7px 6px, #fff 1.800px, transparent 2.400px) 0 0 / 10px 8px; filter: drop-shadow(1px 1px 0 #bbb); }
.drop { align-self: start; margin-top: 27px; width: 0; height: 0; border-left: 8px solid transparent; border-right: 8px solid transparent; border-top: 15px solid #606060; }
.drop-small { margin-top: 37px; border-left-width: 7px; border-right-width: 7px; border-top: 10px solid #999; }
.more { line-height: 44px; font-size: 40px; color: #777; }

.body { display: flex; height: 1416px; border-bottom: 2px solid #b0b0b0; }
.panel { width: 528px; display: flex; flex-direction: column; border-left: 2px solid #aaa; border-right: 4px solid #a0a0a0; background: #fff; }
.panel-title { display: flex; align-items: center; height: 52px; padding: 0 4px 2px; gap: 12px; border-top: 2px solid #fff; border-bottom: 2px solid #aaa; background: linear-gradient(#efefef, #c8c8c8); }
.panel-btn { width: 28px; height: 28px; flex: none; margin-top: -2px; }
.panel-name { margin: 0; flex: 1; padding-left: 151px; font-size: 22px; font-weight: 400; line-height: 44px; }
.panel-tools { display: grid; grid-template-columns: 61px 60px 60px 74px 34px 38px 61px 60px 40px; align-items: start; height: 58px; padding: 10px 0 0 9px; border-top: 2px solid #fff; border-bottom: 4px solid #a0a0a0; background: linear-gradient(#efefef, #c8c8c8); }
.panel-tools svg { display: block; height: 32px; width: 32px; }
.panel-tools svg:nth-child(3) { width: 36px; }
.panel-tools .drop { margin-top: 17px; }
.tree { flex: 1; background: #fff; }
.layer { display: flex; align-items: center; height: 40px; padding-left: 54px; background: #0850d3; color: #fff; }
.check { display: block; width: 28px; height: 28px; flex: none; }
.swatch { width: 32px; height: 32px; margin: 0 12px 0 26px; background: #9c6c58; border: 2px solid #7c4b3b; }
.layer-name { font-size: 25.800px; font-weight: 700; line-height: 36px; padding-bottom: 2px; text-decoration: underline; text-decoration-thickness: 2px; text-underline-offset: 3px; }

.map { display: block; width: 2207px; height: 1414px; border-top: 2px solid #8c8c8c; background: #fff; }
.map polygon { fill: #943a12; stroke: #22140c; stroke-opacity: .85; stroke-width: 1.900; stroke-linejoin: miter; }
.side-tools { width: 65px; display: flex; flex-direction: column; padding-left: 13px; border-left: 2px solid #b5b5b5; background: linear-gradient(90deg, #f2f2f2, #c2c2c2); }
.grip-h { width: 48px; height: 14px; margin: 11px 0 9px; background: radial-gradient(circle at 3px 3px, #fff 1.800px, transparent 2.400px) 0 0 / 12px 14px, radial-gradient(circle at 9px 9px, #fff 1.800px, transparent 2.400px) 0 0 / 12px 14px; filter: drop-shadow(1px 1px 0 #bbb); }
.raster { display: block; width: 48px; height: 48px; margin-bottom: 28px; }

.status { flex: 1; display: grid; grid-template-columns: 719px 133px 353px 69px 72px 200px 37px 70px 115px 134px 46px 118px 134px 40px 37px 89px 302px 102px 18px; align-items: start; padding-left: 12px; background: radial-gradient(ellipse 380px 90px at 1435px 110px, #cfcfcf, rgba(235, 235, 235, 0)) #ebebeb; }
.status > span { padding-top: 25px; line-height: 30px; white-space: nowrap; }
.status > .raised { padding-top: 23px; }
.field { height: 43px; margin-top: 22px; width: 128px; padding-left: 6px; line-height: 39px; background: #fff; border: 2px solid #b9b9b9; white-space: nowrap; }
.field-center { width: 353px; text-align: center; padding: 0; line-height: 37px; }
.field-combo { width: 200px; margin-top: 18px; height: 44px; border-right: 0; border-bottom-color: #eee; }
.combo-btn { width: 35px; height: 42px; margin-top: 18px; border-radius: 0 6px 6px 0; background: linear-gradient(#6db3fa, #1a72f2); }
.combo-btn svg { display: block; width: 35px; height: 42px; }
.sbtn { display: flex; align-items: center; justify-content: center; border: 2px solid #aeaeae; background: linear-gradient(#dedede, #f4f4f4); white-space: nowrap; }
.sbtn-tall { width: 51px; height: 51px; margin-top: 18px; }
.sbtn-lock { width: 52px; height: 51px; margin-top: 16px; }
.sbtn-crs { width: 290px; height: 36px; margin-top: 26px; justify-content: flex-start; padding-left: 8px; gap: 8px; line-height: 26px; padding-bottom: 3px; }
.sbtn-msg { width: 76px; height: 36px; margin-top: 26px; justify-content: flex-start; padding-left: 8px; }
.s-icon { width: 32px; height: 32px; flex: none; display: block; }
.spin { width: 26px; height: 44px; margin-top: 24px; display: block; }
.status .check { margin-top: 30px; }
.resize { width: 18px; height: 30px; align-self: end; margin-left: -2px; }

.menu { position: absolute; left: 424px; top: 322px; width: 498px; height: 672px; padding: 8px 0; background: rgba(245, 245, 245, .985); border-radius: 6px; box-shadow: 0 0 2px 1px rgba(0, 0, 0, .22), 0 10px 28px rgba(0, 0, 0, .34); }
.item { display: flex; height: 32px; padding-left: 36px; font-size: 28px; line-height: 24px; white-space: nowrap; }
.item-icon { height: 40px; padding-left: 41px; line-height: 32px; }
.item-icon svg { width: 32px; height: 32px; margin: 2px 7px 0 0; flex: none; }
.item-active { background: linear-gradient(#146bd6, #1878ee); color: #fff; -webkit-text-stroke: .5px #fff; }
.item-sub::after { content: ""; margin: 5px 26px 0 auto; width: 0; height: 0; border-top: 10px solid transparent; border-bottom: 10px solid transparent; border-left: 17px solid #505050; }
.rule { height: 4px; margin: 10px 0; border: 0; background: #e3e3e3; }
.soft { opacity: .75; }
```
FILE: map.js
```js
// Parcel geometry. A "p" entry is one polygon. Any other entry is a mesh: rows of
// points split by "|", with an optional "@cols,rows" that divides every cell evenly.
const sheets = [
  { x: 1560, y: 200, sx: 3, sy: 3, data: `
91,116 118,118 137,122|91,157 116,158 143,158
p 172,95 200,93 210,133 175,132
p 207,68 252,64 255,92 218,103
p 290,65 342,72 300,118 270,97
p 342,72 362,86 314,128 300,118
p 260,145 300,142 300,176 260,176
220,176 260,176 300,176|220,215 262,213 300,210
p 270,220 300,216 306,246 275,247
p 365,140 400,133 428,172 372,176
p 372,180 414,181 425,228 380,230
p 414,181 440,184 464,222 425,228
p 383,232 422,232 425,270 388,274
p 452,182 480,173 496,206 474,218
p 200,260 228,258 230,290 202,290
p 242,282 275,283 275,312 238,310
p 280,284 306,290 303,316 278,312
p 314,290 346,292 338,328 310,320
138,306 162,307 184,307|138,339 160,340 184,338
120,348 142,349 158,349|122,376 144,378 162,376
p 207,344 250,344 250,374 208,375
p 308,390 350,386 352,420 314,427
468,293 496,292 522,291|470,325 496,325 515,324
457,338 494,338 532,338|457,370 494,369 532,368
456,376 494,373 530,371|458,407 494,406 532,404
p 541,360 570,362 578,416 543,405
p 400,408 452,410 452,452 414,452
480,410 507,411 542,411|462,430 503,434 540,436
p 420,456 452,456 452,478 422,480
463,454 512,446 540,446|466,477 514,476 540,470
380,487 428,486 458,484|382,525 430,522 464,520
468,488 536,478 580,477|470,531 540,525 572,524
p 658,92 659,134 626,118 626,103
p 738,92 798,100 792,134 735,124
p 622,146 648,148 650,210 625,210
658,164 687,163 718,160|656,204 690,206 720,196
p 722,146 758,146 748,180 728,186
p 776,138 798,150 808,178 822,194 762,212
p 792,140 842,152 842,182 806,176
700,206 724,204 748,202|702,240 724,239 748,238|706,272 726,271 748,270
p 775,226 815,224 812,272 772,278
p 818,244 856,232 858,258 818,268
p 660,296 704,280 712,348 668,352
p 640,320 664,320 668,352 644,352
p 722,278 748,274 758,340 726,344
768,284 790,280 808,278|768,308 790,307 808,306
812,276 838,270 866,268 896,262|812,304 840,302 868,300 900,300
776,314 812,310 840,306 866,304 900,302|776,340 814,340 842,338 868,336 902,334
p 638,370 676,366 676,402 638,404
692,358 720,354 742,352 766,352|692,384 720,384 744,384 766,382
676,388 706,388 736,386 768,384|678,404 706,406 738,412 766,412
774,350 812,350|774,376 812,376
776,384 806,384 830,380|776,410 808,412 832,410
846,344 874,343 904,342|850,374 876,374 902,373
850,376 902,376|852,410 904,410
634,416 670,415 702,413 728,412|634,453 670,453 704,453 730,452
p 742,424 772,422 768,450 742,450
780,420 806,419 830,418 858,418|784,448 808,447 832,446 858,444
858,416 904,414|860,448 906,446
904,416 930,414 952,412|906,446 930,444 954,442
p 804,452 858,450 858,486 808,490
858,450 904,448|860,486 906,484
904,448 926,446 954,444|906,484 928,480 952,478
p 934,340 1010,338 1010,368 940,370
p 944,372 1012,370 1008,405 948,404
954,410 994,410|954,440 994,440|956,460 994,460
656,462 686,462 712,460 734,460 754,458 774,456|656,500 688,496 712,494 736,494 756,492 778,492
p 912,488 950,486 948,522 916,520
950,488 1000,486|952,526 1000,526
950,528 974,528 1000,528|952,558 974,558 998,560
p 1004,462 1038,460 1042,510 1010,508
p 1010,516 1042,520 1030,574 1004,572` },
  { x: 1480, y: 500, sx: 2.6133, sy: 3, data: `
p 48,450 90,452 90,512 38,476
p 116,456 146,475 146,496 104,508
p 93,530 134,530 150,568 138,584
p 120,650 146,656 142,692 117,692
132,740 184,734|138,792 190,784@2,1
180,820 246,820|182,874 244,874@2,2
134,890 198,888|136,950 200,950@2,1
p 312,746 352,738 348,810 304,794
p 352,738 398,754 382,820 348,810
p 262,768 282,766 288,808 262,808
p 262,810 292,810 290,862 252,860
p 292,802 345,822 346,844 294,838
p 252,862 300,880 294,888 236,884
p 236,876 262,880 262,916 236,914
p 300,874 335,870 330,894 300,892
p 345,822 400,836 414,866 346,846
p 350,850 414,868 414,886 350,890
392,794 414,795 442,798|386,822 416,840 444,848
p 446,826 466,830 458,862 444,856
p 416,852 444,852 440,874 418,872
262,914 414,890|264,942 420,926@7,1
264,942 390,930|264,970 396,964@6,1
297,978 326,980|297,1014 326,1012
336,980 420,966|338,1002 422,990@3,1
400,1002 424,1002|408,1038 430,1038
400,1054 428,1050|402,1076 428,1076
354,1086 406,1084|356,1126 406,1124@2,1
416,1108 440,1110|416,1138 440,1140
430,892 488,886|432,924 490,918@4,1
430,930 492,920|434,960 492,950@3,1
488,880 556,868|492,916 560,910@4,1
492,922 560,916|492,950 562,944@2,1
560,874 636,860|562,908 640,900@5,1
562,912 642,904|564,944 640,934@5,1
484,870 530,838|490,880 530,878@2,1
530,838 590,834|532,872 594,864@3,1
436,970 476,964|438,998 478,996@2,1
512,964 540,960|514,990 540,990
540,962 626,946|544,986 628,976@4,1
438,1006 536,992|444,1036 540,1018@6,1
450,1046 536,1036|452,1072 538,1060@5,1
456,1076 548,1062|460,1102 550,1092@5,1
544,1000 588,988|548,1022 590,1016@2,1
612,980 626,980|612,1016 630,1012
548,1024 630,1014|550,1052 632,1042@4,1
636,1010 658,1014|634,1038 656,1042
550,1054 590,1050|554,1090 600,1088@2,1
556,1100 600,1090|560,1132 604,1124@3,1
508,1104 532,1106|510,1138 530,1138
612,1114 640,1112|614,1138 638,1136
570,800 590,800|574,828 594,828
588,726 620,724|588,758 620,756@2,1
590,762 626,760|592,794 628,790@2,1
606,796 630,794|608,826 632,824
636,756 732,742|638,786 734,772@6,1
648,716 730,708|650,748 732,740@4,1
638,792 740,780|640,822 742,812@6,1
640,824 700,820|644,852 700,848@4,1
p 722,816 742,814 738,836 728,846 722,832
644,862 690,858|646,888 690,884@2,1
650,900 714,892|654,930 716,924@3,1
654,940 750,926|656,968 752,956@5,1
676,970 716,966|678,1000 716,994@2,1
732,962 756,960|734,992 758,988
718,1004 758,1002|720,1036 758,1032@2,1
748,784 850,766|750,808 852,798@6,1
852,762 900,756|854,792 900,788
768,812 850,800|774,840 850,836@4,1
752,850 856,840|756,876 860,870@5,1
756,882 836,878|760,914 840,906@3,1
764,922 822,916|766,948 824,946@3,1
766,952 828,948|768,984 828,980@3,1
830,950 870,946|832,978 872,976
768,988 830,984|774,1030 834,1020@3,1
832,984 872,980|834,1020 874,1012@2,1
738,712 822,698|742,738 826,728@5,1
742,746 826,730|744,774 828,760@5,1
730,636 834,622|732,662 836,652@6,1
734,666 838,654|736,696 840,686@6,1
616,656 720,640|620,682 722,668@6,1
592,658 616,656|594,690 616,688
620,688 724,672|624,714 728,704@6,1
526,582 552,576|530,614 552,616
552,576 608,572|552,614 610,610@2,1
548,622 610,620|550,646 610,642@4,1
616,574 714,564|618,600 716,594@6,1
618,608 704,602|620,638 704,628@5,1
724,560 826,550|728,590 830,580@6,1
728,592 830,584|730,618 832,608@6,1
482,410 526,408|486,438 528,436@2,1
488,442 508,442|490,462 508,460
506,462 534,462|508,482 534,480
564,426 590,420|568,450 592,446
556,460 594,456|558,482 596,480@2,1
538,488 598,484|542,514 598,512@4,1
520,520 546,518|522,540 546,538
548,520 602,516|550,548 602,550@3,1
604,446 642,446|606,510 642,500@1,4
606,516 644,504|610,556 646,548
646,504 680,500|648,548 682,544
680,498 710,494|684,546 714,540
p 656,382 680,390 682,404 664,436 648,430 656,408
682,402 704,404|670,424 702,436
670,448 704,446|680,470 706,468@2,1
p 652,474 676,484 674,496 642,496
684,474 706,470|684,496 708,492
716,286 798,286|718,322 798,312@5,1
718,328 782,322|720,358 784,350@4,1
704,368 802,354|706,392 804,382@6,1
706,404 764,400|708,438 768,432@5,1
712,448 764,442|720,532 772,524
768,394 806,388|776,512 808,508
p 808,312 866,300 880,502 808,510
884,316 950,306|888,336 954,332@4,1
872,346 970,336|876,372 974,366@6,1
876,382 976,374|880,412 980,404@6,1
896,418 980,408|900,444 984,440@4,1
892,456 926,454|894,478 928,474
924,450 984,446|928,512 988,508@2,1
902,38 944,38|904,118 948,116@1,4
956,76 982,72|956,108 978,114
998,82 1024,80|1004,116 1024,118
878,124 950,122|876,192 956,190@2,2
876,198 960,196|874,232 962,232@3,1
904,242 966,238|906,270 966,266@4,1
906,272 966,270|906,298 966,298@3,1
966,122 984,120|970,188 984,186
986,122 1002,122|986,150 1006,150
986,158 1024,156|988,188 1030,186@2,1
970,192 1008,190|974,222 1010,220@3,1
1030,188 1074,184|1034,218 1074,214@2,1
974,230 1054,228|976,260 1056,256@5,1
976,264 1018,262|980,292 1020,290@3,1
1020,264 1082,264|1022,290 1082,290@2,1
1084,222 1124,220|1088,288 1130,286@2,2
1092,294 1110,294|1098,326 1114,326|1092,364 1112,362
1208,310 1230,310|1212,342 1230,342|1210,374 1232,374
p 1154,350 1176,360 1176,382 1150,370
1182,386 1208,384|1184,414 1210,410
1214,376 1252,374|1214,408 1254,406@3,1
1264,304 1314,296|1268,330 1314,322@2,1
1266,334 1310,330|1262,360 1310,358@2,1
1254,364 1310,360|1254,406 1310,402@4,1
p 1324,282 1334,284 1346,312 1344,318 1322,316
1320,330 1342,330|1324,466 1346,466@1,4
1238,414 1310,406|1240,444 1312,438@4,1
1176,446 1206,450|1176,484 1206,486@2,1
1214,452 1258,450|1216,484 1258,480@3,1
1278,448 1312,442|1276,474 1314,472
890,550 950,546|892,568 952,566@2,1
892,574 996,566|896,604 998,596@6,1
896,614 998,604|900,642 1000,632@6,1
900,644 1000,634|904,676 1004,664@6,1
906,686 1008,676|910,718 1010,706@6,1
910,718 1010,708|912,750 1014,738@6,1
916,760 1014,748|920,786 1016,774@5,1
920,792 956,790|922,824 956,822@2,1
998,542 1056,536|1002,560 1058,556@2,1
1056,530 1108,528|1058,554 1108,548
1002,564 1040,560|1004,590 1042,588
1040,560 1108,550|1042,588 1108,576@3,1
1006,600 1108,588|1008,628 1110,618@7,1
1008,630 1110,618|1012,660 1112,648@7,1
1014,672 1118,660|1018,702 1120,690@6,1
1018,702 1120,692|1022,736 1122,724@6,1
p 1024,744 1124,734 1128,800 1034,808
1042,820 1132,812|1042,846 1134,838@5,1
1042,848 1134,842|1044,872 1136,866@5,1
1042,884 1136,876|1042,914 1138,910@5,1
1094,920 1118,918|1096,940 1118,938
1112,530 1212,518|1114,552 1214,542@6,1
1114,554 1214,544|1118,580 1214,568@6,1
1120,590 1218,576|1122,618 1220,606@6,1
1122,620 1222,608|1124,650 1224,638@6,1
1126,666 1228,654|1130,692 1230,684@6,1
1130,694 1232,686|1134,722 1232,708@5,1
1132,734 1236,724|1134,762 1238,752@6,1
1136,764 1238,754|1140,792 1240,782@6,1
1140,804 1242,794|1142,832 1244,822@6,1
1142,834 1244,824|1144,866 1246,858@6,1
1146,878 1248,866|1148,908 1250,898@6,1
1148,910 1250,900|1146,940 1252,938@6,1
1218,514 1322,506|1220,530 1322,522@6,1
1222,534 1326,524|1224,566 1328,550@6,1
1228,572 1264,570|1230,600 1264,598@2,1
1290,574 1306,572|1292,594 1306,594
1308,566 1334,566|1308,582 1332,580
1232,610 1332,600|1234,634 1334,626@6,1
1236,650 1338,638|1240,680 1340,670@6,1
1242,682 1340,672|1246,708 1342,698@5,1
1246,722 1344,710|1248,746 1346,736@4,1
1248,748 1346,738|1252,782 1348,774@5,1
1250,796 1348,786|1252,820 1350,812@5,1
1252,822 1272,822|1254,856 1274,854
1314,814 1350,812|1316,846 1350,842@2,1
1256,864 1360,854|1260,890 1362,884@4,1
1262,892 1362,886|1266,926 1364,918@6,1
1268,934 1364,926|1268,962 1366,956@5,1
1268,964 1366,958|1272,998 1366,994@6,1
1270,1002 1366,996|1272,1036 1368,1030@6,1
1274,1042 1366,1036|1276,1070 1368,1060@6,1
1190,944 1260,940|1194,970 1262,968@4,1
1200,974 1262,970|1202,998 1264,998@4,1
1216,1012 1264,1008|1218,1040 1266,1036@2,1
1246,1044 1268,1042|1248,1062 1268,1064
1284,1088 1368,1068|1282,1102 1360,1108@5,1
1328,504 1368,498|1330,524 1370,518@2,1
1330,526 1412,520|1334,552 1414,548@4,1
1340,560 1462,558|1342,590 1462,586@7,1
1342,600 1380,598|1342,622 1382,620@2,1
1404,594 1448,592|1406,620 1444,616
1344,638 1408,630|1344,660 1406,656@4,1
1408,626 1436,626|1408,656 1434,656
1344,664 1432,658|1346,692 1430,688@5,1
1350,706 1456,692|1352,730 1458,722@4,1
1352,734 1458,724|1356,762 1460,754@6,1
1356,766 1460,756|1358,800 1460,790@6,1
1360,808 1460,798|1360,838 1462,830@5,1
1478,694 1520,692|1480,718 1520,718
1462,730 1506,728|1468,758 1510,754
1462,768 1516,760|1464,798 1518,794
1464,802 1528,798|1466,842 1528,838@2,1
1466,844 1504,842|1468,868 1500,862
1364,850 1460,840|1364,876 1462,868@5,1
1364,880 1468,872|1366,914 1470,908@6,1
1368,924 1472,916|1370,948 1474,944@4,1
1374,952 1476,950|1376,990 1478,984@6,1
1380,996 1456,990|1382,1026 1460,1018@5,1
1382,1032 1424,1024|1386,1058 1424,1048@3,1
932,902 974,894|938,938 980,928@2,1
968,934 990,932|974,964 996,968
934,972 962,972|936,998 962,998` },
  { x: 1180, y: 900, sx: 3, sy: 3, data: `
p 415,38 484,76 458,126 388,94
p 484,76 567,116 540,173 458,126
p 450,128 514,168 496,226 428,206
p 428,206 496,226 490,280 410,274
p 355,188 411,192 403,276 345,268
512,192 584,210 645,228 720,240|492,278 564,286 630,304 712,310
p 468,288 526,290 526,356 464,356
628,310 676,316|608,382 670,388|582,458 664,466
p 676,316 714,318 734,384 670,388
670,390 734,390|666,472 730,464|670,522 724,518|672,572 722,572|672,626 722,626
p 582,458 664,466 664,506 584,504
584,508 664,508|584,570 664,570
p 600,574 672,574 672,626 600,610
330,418 358,420 424,430 490,436|328,484 356,484 412,490 474,500
498,440 542,452 584,462|482,498 528,502 582,506
226,484 288,500|212,548 276,558|198,604 266,616
334,550 414,570|308,626 382,646|276,706 352,718
468,516 544,524|448,590 524,604|424,660 502,676|398,728 468,746
524,606 598,616|508,672 586,686
600,610 666,626|586,686 650,704|568,758 630,772
508,676 586,690|478,750 558,770|452,812 534,828
570,758 630,774|548,820 610,842
724,628 766,630|728,710 770,712|710,790 766,796
746,554 818,542 892,522 966,510|768,626 832,614 918,602 990,584|770,712 846,684 922,670 1008,656
786,408 856,394|800,464 874,448|818,542 892,522
874,448 948,438|892,522 966,510
918,312 990,290|936,386 1000,374|952,448 1018,438|966,498 1030,480
p 826,354 902,308 914,346 856,380
1014,404 1078,398|1030,480 1090,466
998,546 1068,536|1006,612 1078,606|1010,668 1074,668
812,704 896,682 984,680|810,740 890,746 982,750
890,750 976,752 1040,754|868,794 962,804 1000,812
1070,690 1128,718|1042,754 1102,776|1000,816 1070,850|978,890 1064,892
1090,822 1164,842|1064,892 1156,904
1144,722 1214,700|1160,788 1236,766|1166,842 1258,834|1158,904 1256,904
p 168,664 244,690 218,774 134,766
770,746 838,750|758,868 818,884
630,774 706,788|616,842 694,856
706,788 768,796|694,858 758,870
694,860 756,870 818,886|674,926 738,938 812,946
818,888 928,890|814,952 924,958
546,822 608,844|520,900 592,912|508,934 580,944|494,970 568,978|480,1060 554,1070
218,778 292,790 362,800 450,812|204,854 284,872 352,880 440,890|188,942 276,962 342,970 424,976
440,890 508,898|424,976 494,976
p 104,930 186,942 178,1018 92,1004
276,962 342,970 424,976|268,1036 332,1046 412,1064
180,1020 268,1036 332,1046 412,1064|176,1100 256,1112 320,1124 402,1138
176,1100 256,1112|170,1164 246,1180
256,1112 288,1118 320,1124|246,1180 280,1184 312,1188
732,938 812,948|724,1018 800,1030
568,1004 646,1012 724,1020 800,1030|556,1088 638,1096 714,1106 786,1112
812,962 872,974 968,968|800,1030 872,1048 960,1052
972,904 1060,900|970,968 1048,966
1060,902 1132,910 1208,914 1256,926|1046,968 1120,976 1196,986 1254,992|1030,1050 1106,1062 1182,1066 1254,1070
p 1256,928 1318,928 1310,1070 1256,1070
800,1030 872,1050 956,1052|786,1112 868,1120 936,1120
p 956,1052 1016,1054 1006,1130 936,1120
1026,1050 1104,1064 1182,1068 1252,1070 1310,1070|1008,1130 1088,1138 1168,1142 1242,1142 1310,1142` },
  { x: 1180, y: 1240, sx: 3, sy: 3, data: `
786,94 868,98 934,100 1006,110 1088,120 1168,122 1240,122 1308,122|780,160 866,180 928,184 1004,184 1084,188 1160,190 1234,196 1312,196
324,104 402,118|312,170 386,182
402,118 476,126 550,130 628,134|386,182 470,200 544,204 622,212
634,80 714,88|628,134 706,148|622,212 700,220
p 68,120 154,142 140,224 52,208
142,230 226,238|142,310 222,312
154,320 218,318|152,404 214,402
232,240 306,240|228,302 300,302|220,370 298,362|214,440 294,434|204,524 280,522
312,172 386,184|306,234 376,244
p 388,194 466,210 450,274 380,262
320,258 400,270|316,332 394,344|306,404 378,412|284,520 352,524
404,346 472,378|378,412 448,434
p 378,412 448,434 434,552 350,548
350,548 434,552|340,614 428,612|340,686 416,684
p 474,382 548,432 534,470 450,462
450,466 510,474|442,538 500,546|432,614 500,620|420,682 504,684
p 410,278 464,316 458,360 400,322
p 482,268 538,290 524,350 470,320
p 538,290 606,328 588,402 524,350
p 470,320 524,350 500,376 462,358
p 524,350 588,402 558,430 500,376
618,226 700,228|612,304 700,320|610,386 700,392|604,470 694,466|604,568 694,564
700,230 768,230|700,320 772,322|700,392 774,396
772,326 846,322|776,398 850,392|788,486 862,474
p 696,466 784,486 794,522 696,536
p 696,538 794,526 784,570 696,564
780,160 890,184|768,226 880,246
892,186 998,190|880,246 982,266|856,328 946,352
1004,188 1082,190|992,250 1070,262
1234,196 1312,196|1232,234 1312,232
1230,236 1290,236|1228,272 1286,272
p 1290,234 1312,234 1318,272 1296,270
992,252 1070,264|970,324 1052,336|948,398 1034,406
1074,264 1146,272 1228,274 1296,272|1056,336 1128,344 1204,350 1282,352
p 1298,272 1320,272 1316,356 1284,352
1056,336 1128,344 1208,352 1248,354|1036,406 1108,416 1184,422 1244,426
p 1248,354 1316,358 1304,428 1242,428
1322,166 1394,166|1326,206 1394,206|1326,278 1398,284|1326,354 1398,350
894,394 942,402|884,474 936,476|868,520 926,524
1104,420 1182,428|1086,488 1164,496
1242,428 1304,430|1238,500 1300,500|1230,564 1308,558|1228,624 1318,610
936,478 1010,486 1084,490 1164,496 1234,500|930,544 994,554 1078,566 1146,572 1230,574
p 796,526 906,544 910,626 784,576
910,546 994,554 1078,566 1146,574|914,628 990,648 1076,648 1134,634
716,572 792,584 872,622 940,644|702,664 778,678 868,696 958,710
p 940,644 1000,654 1012,706 958,710
p 1000,654 1082,652 1092,690 1012,706
1082,652 1136,634|1102,716 1164,702|1120,784 1188,760|1150,874 1218,828|1196,968 1264,932
1210,632 1320,620|1230,690 1344,674|1288,794 1386,754|1340,892 1432,836
570,584 640,580 694,580|576,674 642,670 694,668
470,686 538,682 576,676 642,672 696,670|472,768 544,762 592,750 650,746 702,742|476,856 550,844 610,820 658,794 708,786
p 656,812 714,798 730,874 680,886
p 766,758 892,752 908,854 854,870 836,792 776,804
p 1006,756 1072,854 1006,900 946,798
p 1016,748 1056,738 1106,790 1064,820
p 596,918 664,912 674,962 604,978` },
  { x: 1560, y: 900, sx: 3, sy: 3, data: `
103,272 208,268|110,318 208,320|118,380 206,386
208,320 280,332 370,348|206,386 268,394 340,408
p 60,396 146,388 146,458 38,440
148,390 244,408 340,412|146,458 238,472 316,490
238,472 316,490|218,552 294,558
218,554 254,558 292,560|214,594 248,598 284,604
214,596 286,604|208,632 278,642|204,664 272,674
296,572 362,578|286,652 360,652
44,524 134,530 206,530|48,574 134,574 204,574|50,622 134,620 206,620
p 134,622 204,622 198,686 136,686
136,686 198,686 270,686|136,770 196,766 266,764|136,838 196,838 266,838
274,690 346,698 438,706|270,768 342,774 430,776
270,770 342,776 414,778 482,788|266,838 334,846 406,852 478,854
438,708 526,716 608,718|430,776 526,782 600,788
438,656 504,662 564,666 622,670|438,704 504,706 556,712 606,714
398,580 450,592 510,596 566,600 626,604|376,654 440,660 502,664 562,666 620,668
380,506 448,510 502,512 552,514 628,518|376,566 446,566 500,570 548,574 622,580
382,352 462,356 526,358 596,358|360,412 454,420 524,424 590,426
360,416 454,422 558,430 636,434|334,494 448,500 554,508 630,512
p 660,416 736,428 708,524 638,510
130,846 262,848 332,850 406,852 478,858 548,866 622,870|128,912 260,914 330,920 404,926 478,932 548,938 616,940
674,560 752,574 826,582|656,638 730,650 802,658|632,708 706,724 770,736|604,786 684,800 742,806|590,852 656,860 718,868
p 808,640 898,650 886,734 782,728
770,730 826,732 884,736|742,796 804,810 876,816
742,800 808,812 874,818 940,820|716,876 792,888 866,896 936,902
636,870 712,878 792,888 866,896 936,902|624,984 696,992 776,1004 856,1016 934,1024
802,296 864,286|826,390 884,378|852,488 912,466|904,626 954,618|908,662 958,670
886,334 934,322|914,460 968,442
p 934,320 986,292 994,352 948,358
p 986,292 1040,276 1048,308 996,352
p 980,366 1042,374 1032,426 974,428
p 1042,374 1110,384 1100,458 1030,452
p 944,458 1024,452 1006,528 944,522
1024,454 1100,460|1006,530 1086,552
p 944,526 1004,530 1018,604 970,596
p 1006,532 1086,554 1052,614 1018,602
968,612 1048,624|968,680 1036,688|934,756 996,772
1114,318 1190,328|1116,390 1188,394
1118,392 1186,396 1254,400|1108,462 1182,468 1246,474|1092,552 1166,562 1230,570
1088,554 1164,564|1066,626 1150,638|1044,690 1144,706
1150,638 1224,650|1146,706 1218,716
p 1228,614 1292,624 1276,722 1220,716
p 1190,312 1240,312 1266,346 1190,346
1190,370 1260,370|1190,392 1260,390
1036,702 1094,710 1138,714|1004,770 1090,778 1134,780
p 1104,240 1162,232 1186,256 1118,300
p 1220,274 1258,256 1280,280 1248,300
p 1280,280 1304,296 1264,322 1248,300
1250,178 1328,172|1254,248 1332,250
1334,274 1408,278|1328,340 1404,346
1348,346 1404,346|1340,424 1396,432
974,782 1052,784 1128,784|968,864 1050,864 1126,866
968,864 1048,864|968,926 1046,926|962,1066 1042,1062
1048,866 1126,866|1046,926 1126,928|1046,988 1126,990|1042,1062 1126,1066
1140,854 1204,854 1270,856 1352,856|1140,964 1204,966 1270,968 1350,968|1140,1058 1204,1058 1270,1060 1348,1058
p 1364,898 1430,908 1426,944 1364,934` },
  { x: 0, y: 0, sx: 1, sy: 1, data: `
p 1856,1397 1925,1394 1925,1422 1856,1424
p 1747,1439 1766,1437 1770,1464 1749,1467` },
];

const map = document.getElementById('map');
const parse = (s) => s.trim().split(' ').map((p) => p.split(',').map(Number));
const mix = (a, b, t) => [a[0] + (b[0] - a[0]) * t, a[1] + (b[1] - a[1]) * t];

for (const sheet of sheets) {
  const add = (pts) => {
    const el = document.createElementNS('http://www.w3.org/2000/svg', 'polygon');
    el.setAttribute('points', pts.map(([x, y]) =>
      (sheet.x + x / sheet.sx).toFixed(1) + ',' + (sheet.y + y / sheet.sy).toFixed(1)).join(' '));
    map.append(el);
  };
  for (const line of sheet.data.trim().split('\n')) {
    const [body, split] = line.split('@');
    if (body.startsWith('p ')) { add(parse(body.slice(2))); continue; }
    const [cols, rows] = split ? split.split(',').map(Number) : [1, 1];
    const mesh = body.split('|').map(parse);
    for (let r = 0; r + 1 < mesh.length; r++) {
      for (let c = 0; c + 1 < mesh[r].length; c++) {
        const [a, b, d, e] = [mesh[r][c], mesh[r][c + 1], mesh[r + 1][c + 1], mesh[r + 1][c]];
        const at = (u, v) => mix(mix(a, b, u), mix(e, d, u), v);
        for (let i = 0; i < cols; i++) {
          for (let j = 0; j < rows; j++) {
            add([at(i / cols, j / rows), at((i + 1) / cols, j / rows),
              at((i + 1) / cols, (j + 1) / rows), at(i / cols, (j + 1) / rows)]);
          }
        }
      }
    }
  }
}
```
